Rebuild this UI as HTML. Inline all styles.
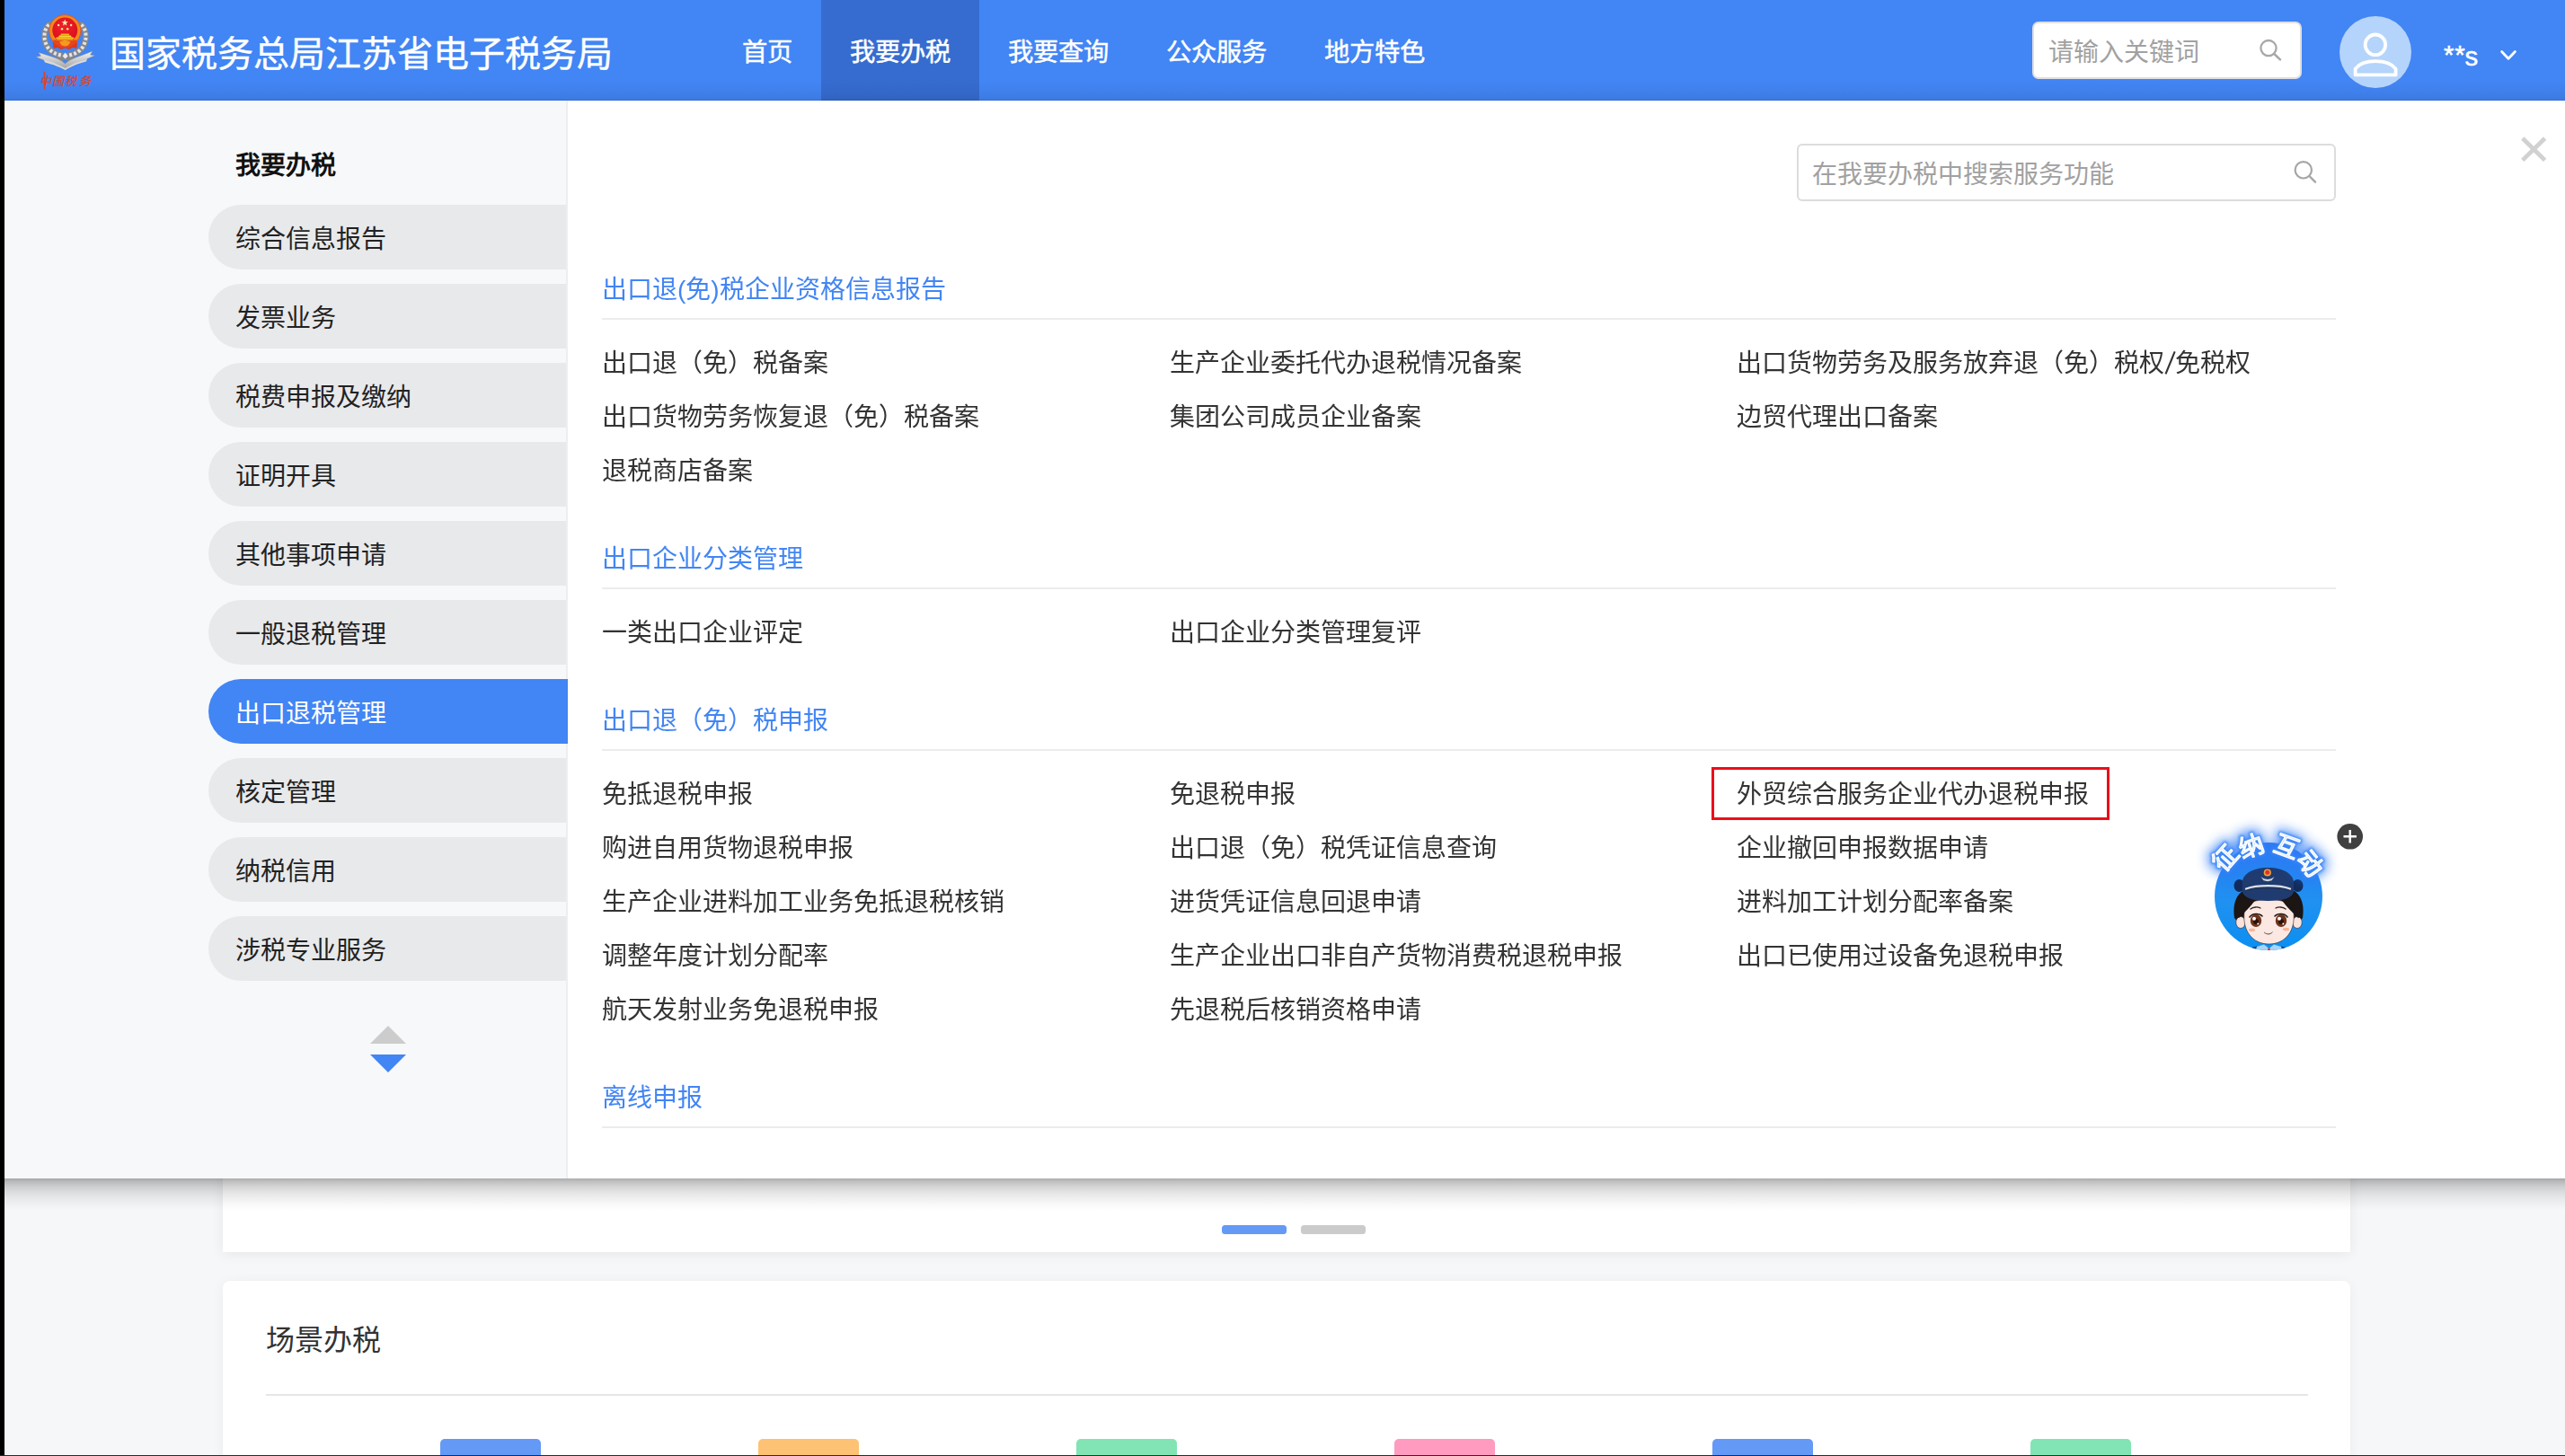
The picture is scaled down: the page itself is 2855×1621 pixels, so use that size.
<!DOCTYPE html>
<html lang="zh-CN">
<head>
<meta charset="utf-8">
<title>国家税务总局江苏省电子税务局</title>
<style>
*{margin:0;padding:0;box-sizing:border-box;}
html,body{width:2855px;height:1621px;overflow:hidden;}
body{position:relative;background:#f6f7f9;font-family:"Liberation Sans",sans-serif;color:#333;}
.abs{position:absolute;}
.t{position:absolute;white-space:nowrap;font-size:28px;height:40px;line-height:40px;}
/* underlying page */
#card1{left:248px;top:1200px;width:2368px;height:194px;background:#fff;box-shadow:0 2px 14px rgba(0,0,0,.07);}
#card2{left:248px;top:1426px;width:2368px;height:260px;background:#fff;border-radius:8px;box-shadow:0 2px 14px rgba(0,0,0,.05);}
.dot{top:1364px;width:72px;height:10px;border-radius:3.5px;}
.tile{top:1602px;width:112px;height:40px;border-radius:5px 5px 0 0;}
/* header */
#hdr{left:5px;top:0;width:2850px;height:112px;background:#4285f4;}
#hdr .grad{left:0;top:0;width:100%;height:100%;background:linear-gradient(to bottom,rgba(0,0,0,0) 80%,rgba(0,0,30,.035) 90%,rgba(0,0,30,.08) 98.5%,rgba(0,0,60,.2) 100%);}
.nav{top:0;height:112px;line-height:117px;font-size:28.3px;-webkit-text-stroke:.45px #fff;color:#fff;text-align:center;white-space:nowrap;}
#title{left:121.5px;top:29.5px;height:60px;line-height:60px;font-size:40px;-webkit-text-stroke:.4px #fff;color:#fff;white-space:nowrap;}
/* panel */
#panel{left:5px;top:112px;width:2850px;height:1200px;background:#fff;}
#side{left:0;top:0;width:625px;height:1200px;background:#f7f8fa;border-right:2px solid #eeeeef;box-sizing:content-box;}
.pill{left:227px;width:398px;height:72px;border-radius:36px 0 0 36px;background:#e8e9eb;}
.pill span{position:absolute;left:30px;top:3px;height:72px;line-height:72px;font-size:28px;color:#222;white-space:nowrap;}
.pill.on{background:#4285f4;width:400px;}
.pill.on span{color:#fff;}
.h{color:#4285f4;}
.hr{left:670px;width:1930px;height:2px;background:#ececec;}
#pshadow{left:5px;top:1312px;width:2850px;height:36px;background:linear-gradient(to bottom,rgba(0,0,0,.32) 0,rgba(0,0,0,.24) 4px,rgba(0,0,0,.17) 9px,rgba(0,0,0,.11) 15px,rgba(0,0,0,.065) 21px,rgba(0,0,0,.03) 28px,rgba(0,0,0,0) 36px);}
</style>
</head>
<body>

<!-- underlying home page -->
<div id="card1" class="abs"></div>
<div class="abs dot" style="left:1360px;background:#6499f5;"></div>
<div class="abs dot" style="left:1448px;background:#cbcbcb;"></div>
<div id="card2" class="abs"></div>
<div class="abs" style="left:296px;top:1468px;height:48px;line-height:48px;font-size:32px;color:#333;white-space:nowrap;">场景办税</div>
<div class="abs" style="left:296px;top:1552px;width:2273px;height:2px;background:#e6e6e6;"></div>
<div class="abs tile" style="left:490px;background:#6499f5;"></div>
<div class="abs tile" style="left:844px;background:#fdc273;"></div>
<div class="abs tile" style="left:1198px;background:#82e4b4;"></div>
<div class="abs tile" style="left:1552px;background:#fe9bbf;"></div>
<div class="abs tile" style="left:1906px;background:#6499f5;"></div>
<div class="abs tile" style="left:2260px;background:#82e4b4;"></div>

<!-- panel shadow -->
<div id="pshadow" class="abs"></div>

<!-- dropdown panel -->
<div id="panel" class="abs">
  <div id="side" class="abs"></div>
</div>

<!-- sidebar -->
<div class="t" style="left:262px;top:165px;font-weight:bold;color:#111;">我要办税</div>
<div class="abs pill" style="left:232px;top:228px;"><span>综合信息报告</span></div>
<div class="abs pill" style="left:232px;top:316px;"><span>发票业务</span></div>
<div class="abs pill" style="left:232px;top:404px;"><span>税费申报及缴纳</span></div>
<div class="abs pill" style="left:232px;top:492px;"><span>证明开具</span></div>
<div class="abs pill" style="left:232px;top:580px;"><span>其他事项申请</span></div>
<div class="abs pill" style="left:232px;top:668px;"><span>一般退税管理</span></div>
<div class="abs pill on" style="left:232px;top:756px;"><span>出口退税管理</span></div>
<div class="abs pill" style="left:232px;top:844px;"><span>核定管理</span></div>
<div class="abs pill" style="left:232px;top:932px;"><span>纳税信用</span></div>
<div class="abs pill" style="left:232px;top:1020px;"><span>涉税专业服务</span></div>
<svg class="abs" style="left:412px;top:1142px;" width="40" height="52" viewBox="0 0 40 52"><path d="M20 0 L40 20 L0 20 Z" fill="#cccccc"/><path d="M0 32 L40 32 L20 52 Z" fill="#4285f4"/></svg>

<!-- content search -->
<div class="abs" style="left:2000px;top:160px;width:600px;height:64px;border:2px solid #dcdcdc;border-radius:6px;background:#fff;"></div>
<div class="t" style="left:2017px;top:175px;color:#a1a1a1;">在我要办税中搜索服务功能</div>
<svg class="abs" style="left:2550px;top:176px;" width="32" height="32" viewBox="0 0 32 32"><circle cx="13.8" cy="13.3" r="9.2" fill="none" stroke="#a6a6a6" stroke-width="2.2"/><path d="M20.4 20 L27 26.6" stroke="#a6a6a6" stroke-width="2.4" stroke-linecap="round"/></svg>
<svg class="abs" style="left:2804px;top:150px;" width="32" height="32" viewBox="0 0 32 32"><path d="M3.8 4 L28.6 28.4 M28.6 4 L3.8 28.4" stroke="#d1d1d1" stroke-width="4.8" fill="none"/></svg>

<div id="content" class="abs" style="left:0;top:0;width:2855px;height:1312px;will-change:transform;">
<!-- section 1 -->
<div class="t h" style="left:670px;top:303px;">出口退(免)税企业资格信息报告</div>
<div class="abs hr" style="top:354px;"></div>
<div class="t" style="left:670px;top:385px;">出口退（免）税备案</div>
<div class="t" style="left:1301.5px;top:385px;">生产企业委托代办退税情况备案</div>
<div class="t" style="left:1933px;top:385px;">出口货物劳务及服务放弃退（免）税权<span style="display:inline-block;position:relative;width:12.2px;height:0;"><svg style="position:absolute;left:0;top:-23.4px;overflow:visible;" width="12.2" height="26" viewBox="0 0 12.2 26"><path d="M1.5 25.4 L11.7 0.4" stroke="#333" stroke-width="2.1" fill="none"/></svg></span>免税权</div>
<div class="t" style="left:670px;top:445px;">出口货物劳务恢复退（免）税备案</div>
<div class="t" style="left:1301.5px;top:445px;">集团公司成员企业备案</div>
<div class="t" style="left:1933px;top:445px;">边贸代理出口备案</div>
<div class="t" style="left:670px;top:505px;">退税商店备案</div>

<!-- section 2 -->
<div class="t h" style="left:670px;top:603px;">出口企业分类管理</div>
<div class="abs hr" style="top:654px;"></div>
<div class="t" style="left:670px;top:685px;">一类出口企业评定</div>
<div class="t" style="left:1301.5px;top:685px;">出口企业分类管理复评</div>

<!-- section 3 -->
<div class="t h" style="left:670px;top:783px;">出口退（免）税申报</div>
<div class="abs hr" style="top:834px;"></div>
<div class="t" style="left:670px;top:865px;">免抵退税申报</div>
<div class="t" style="left:1301.5px;top:865px;">免退税申报</div>
<div class="abs" style="left:1905px;top:854px;width:443px;height:59px;border:3px solid #ea0f19;"></div>
<div class="t" style="left:1933px;top:865px;">外贸综合服务企业代办退税申报</div>
<div class="t" style="left:670px;top:925px;">购进自用货物退税申报</div>
<div class="t" style="left:1301.5px;top:925px;">出口退（免）税凭证信息查询</div>
<div class="t" style="left:1933px;top:925px;">企业撤回申报数据申请</div>
<div class="t" style="left:670px;top:985px;">生产企业进料加工业务免抵退税核销</div>
<div class="t" style="left:1301.5px;top:985px;">进货凭证信息回退申请</div>
<div class="t" style="left:1933px;top:985px;">进料加工计划分配率备案</div>
<div class="t" style="left:670px;top:1045px;">调整年度计划分配率</div>
<div class="t" style="left:1301.5px;top:1045px;">生产企业出口非自产货物消费税退税申报</div>
<div class="t" style="left:1933px;top:1045px;">出口已使用过设备免退税申报</div>
<div class="t" style="left:670px;top:1105px;">航天发射业务免退税申报</div>
<div class="t" style="left:1301.5px;top:1105px;">先退税后核销资格申请</div>

<!-- section 4 -->
<div class="t h" style="left:670px;top:1203px;">离线申报</div>
<div class="abs hr" style="top:1254px;"></div>

</div>

<!-- mascot -->
<svg class="abs" style="left:2430px;top:900px;overflow:visible;" width="220" height="170" viewBox="2430 900 220 170">
  <defs>
    <linearGradient id="mbg" x1="0" y1="0" x2="0" y2="1"><stop offset="0" stop-color="#2b78f1"/><stop offset=".55" stop-color="#2091f1"/><stop offset="1" stop-color="#0a8ff2"/></linearGradient>
    <clipPath id="mclip"><circle cx="2525" cy="998" r="60"/></clipPath>
    <filter id="glow" x="-30%" y="-30%" width="160%" height="160%"><feGaussianBlur stdDeviation="6.5"/></filter>
    <filter id="glow2" x="-30%" y="-30%" width="160%" height="160%"><feGaussianBlur stdDeviation="1.6"/></filter>
  </defs>
  <circle cx="2525" cy="998" r="60" fill="url(#mbg)"/>
  <g clip-path="url(#mclip)">
    <!-- hair back -->
    <path d="M2487 1022 C2484 1000 2492 985 2525 985 C2558 985 2566 1000 2563 1022 L2556 1030 L2494 1030 Z" fill="#1b1514"/>
    <!-- buns -->
    <ellipse cx="2492.5" cy="986" rx="6" ry="7" fill="#122b5c"/>
    <ellipse cx="2557.5" cy="986" rx="6" ry="7" fill="#122b5c"/>
    <!-- ears -->
    <ellipse cx="2494" cy="1027" rx="5.2" ry="6.5" fill="#f9e3dc" stroke="#3a2a26" stroke-width=".6"/>
    <ellipse cx="2557" cy="1027" rx="5.2" ry="6.5" fill="#f9e3dc" stroke="#3a2a26" stroke-width=".6"/>
    <!-- face -->
    <path d="M2498 1016 C2498 996 2552 996 2553 1016 C2555 1036 2544 1051 2525.5 1051 C2507 1051 2496 1036 2498 1016 Z" fill="#fbe8e2" stroke="#3a2a26" stroke-width=".6"/>
    <!-- fringe -->
    <path d="M2488 1020 C2487 1002 2497 994 2512 998 C2509 1006 2500 1014 2492 1022 Z" fill="#1b1514"/>
    <path d="M2562 1020 C2563 1002 2553 994 2538 998 C2541 1006 2550 1014 2558 1022 Z" fill="#1b1514"/>
    <!-- hat -->
    <path d="M2496 986 C2494 974 2506 966 2524.5 966 C2543 966 2555 974 2553 986 L2553 993 C2551 1000 2541 1003 2524.5 1003 C2508 1003 2498 1000 2496 993 Z" fill="#1f3b70"/>
    <path d="M2500 989.5 C2512 985 2537 985 2549 989.5" fill="none" stroke="#dfe3ea" stroke-width="2.3" stroke-linecap="round"/>
    <path d="M2500 991.8 C2512 987.4 2537 987.4 2549 991.8" fill="none" stroke="#2a2f3a" stroke-width=".7" stroke-linecap="round"/>
    <!-- badge -->
    <circle cx="2523.8" cy="971.5" r="4.1" fill="#e9a63a"/>
    <circle cx="2523.8" cy="971.2" r="2.5" fill="#e3312a"/>
    <path d="M2516.5 976.2 L2520 978.3 L2524 979 L2528 978.3 L2531.5 976.2 L2528.5 980.3 L2524 981.3 L2519.5 980.3 Z" fill="#cfd3da"/>
    <!-- eyebrows -->
    <path d="M2505 1012 C2508 1009.5 2513 1009.5 2516 1011" fill="none" stroke="#2a1f1c" stroke-width="1.3" stroke-linecap="round"/>
    <path d="M2533 1011 C2536 1009.5 2541 1009.5 2544 1012" fill="none" stroke="#2a1f1c" stroke-width="1.3" stroke-linecap="round"/>
    <!-- eyes -->
    <ellipse cx="2511" cy="1025" rx="6.2" ry="7" fill="#6e321a"/>
    <ellipse cx="2539" cy="1025" rx="6.2" ry="7" fill="#6e321a"/>
    <path d="M2504 1021 C2507 1016.5 2515 1016.5 2518 1020" fill="none" stroke="#241a17" stroke-width="1.6" stroke-linecap="round"/>
    <path d="M2532 1020 C2535 1016.5 2543 1016.5 2546 1021" fill="none" stroke="#241a17" stroke-width="1.6" stroke-linecap="round"/>
    <circle cx="2511" cy="1026" r="3" fill="#2a120a"/>
    <circle cx="2539" cy="1026" r="3" fill="#2a120a"/>
    <circle cx="2509" cy="1022.8" r="2" fill="#fff"/>
    <circle cx="2537" cy="1022.8" r="2" fill="#fff"/>
    <circle cx="2513.3" cy="1028.5" r="1" fill="#fff"/>
    <circle cx="2541.3" cy="1028.5" r="1" fill="#fff"/>
    <!-- cheeks -->
    <ellipse cx="2506.5" cy="1035.3" rx="3.6" ry="1.9" fill="#fbb59a"/>
    <ellipse cx="2544.5" cy="1034.6" rx="3.6" ry="1.9" fill="#fbb59a"/>
    <!-- mouth -->
    <path d="M2520.5 1038.3 C2523 1040.6 2527 1040.6 2529.2 1038" fill="none" stroke="#4a2d28" stroke-width=".9" stroke-linecap="round"/>
    <!-- collar -->
    <path d="M2508 1060 L2512 1054 L2520 1051.5 L2525.5 1056 L2531 1051.5 L2539 1054 L2543 1060 Z" fill="#a9d3f7"/>
    <path d="M2502 1060 L2506 1055 L2512 1053.5 L2510 1060 Z" fill="#1f3b70"/>
    <path d="M2549 1060 L2545 1055 L2539 1053.5 L2541 1060 Z" fill="#1f3b70"/>
    <path d="M2524.5 1055.5 L2526.5 1055.5 L2527 1060 L2524 1060 Z" fill="#c4352c"/>
  </g>
  <!-- arc text glow -->
  <g font-family="'Liberation Sans',sans-serif" font-weight="bold" font-size="27.5" text-anchor="middle">
    <g fill="#2f7bf6" stroke="#2f7bf6" stroke-width="9" filter="url(#glow)" opacity=".8">
      <text transform="translate(2476.7 954.9) rotate(-48)" y="10">征</text>
      <text transform="translate(2505.9 942) rotate(-19)" y="10">纳</text>
      <text transform="translate(2545 942) rotate(20)" y="10">互</text>
      <text transform="translate(2571.3 960.7) rotate(51)" y="10">动</text>
    </g>
    <g fill="#3b86f7" stroke="#3b86f7" stroke-width="3.2" filter="url(#glow2)">
      <text transform="translate(2476.7 954.9) rotate(-48)" y="10">征</text>
      <text transform="translate(2505.9 942) rotate(-19)" y="10">纳</text>
      <text transform="translate(2545 942) rotate(20)" y="10">互</text>
      <text transform="translate(2571.3 960.7) rotate(51)" y="10">动</text>
    </g>
    <g fill="#c4dcfe" stroke="#fff" stroke-width="1.45" stroke-linejoin="round" font-weight="normal">
      <text transform="translate(2476.7 954.9) rotate(-48)" y="10">征</text>
      <text transform="translate(2505.9 942) rotate(-19)" y="10">纳</text>
      <text transform="translate(2545 942) rotate(20)" y="10">互</text>
      <text transform="translate(2571.3 960.7) rotate(51)" y="10">动</text>
    </g>
  </g>
  <!-- plus button -->
  <circle cx="2615.7" cy="931.3" r="14.3" fill="#404040"/>
  <path d="M2608.5 931.3 L2622.9 931.3 M2615.7 924.1 L2615.7 938.5" stroke="#fff" stroke-width="2.4" fill="none"/>
</svg>

<!-- header -->
<div id="hdr" class="abs">
  <div class="abs" style="left:909px;top:0;width:176px;height:112px;background:#366cd0;"></div>
  <div class="abs grad"></div>
</div>
<div id="title" class="abs">国家税务总局江苏省电子税务局</div>
<div class="abs nav" style="left:794px;width:120px;">首页</div>
<div class="abs nav" style="left:914px;width:176px;">我要办税</div>
<div class="abs nav" style="left:1090px;width:176px;">我要查询</div>
<div class="abs nav" style="left:1266px;width:176px;">公众服务</div>
<div class="abs nav" style="left:1442px;width:176px;">地方特色</div>

<!-- logo -->
<svg class="abs" style="left:36px;top:12px;" width="74" height="92" viewBox="36 12 74 92">
  <defs>
    <linearGradient id="sil" x1="0" y1="0" x2="0" y2="1"><stop offset="0" stop-color="#f4f4f4"/><stop offset=".5" stop-color="#c9c9c9"/><stop offset="1" stop-color="#9c9c9c"/></linearGradient>
    <radialGradient id="rg" cx=".45" cy=".35" r=".7"><stop offset="0" stop-color="#f0202a"/><stop offset="1" stop-color="#d80f1c"/></radialGradient>
  </defs>
  <!-- wreath -->
  <path d="M54.5 27.5 C48 33 47.5 46 54.5 54.5 C58 58.5 63 60.5 68 61.5 L78 65.2" fill="none" stroke="#86878b" stroke-width="6.6" stroke-linecap="round" stroke-linejoin="round"/>
  <path d="M90.5 27.5 C97 33 97.5 46 90.5 54.5 C87 58.5 82 60.5 77 61.5 L67 65.2" fill="none" stroke="#86878b" stroke-width="6.6" stroke-linecap="round" stroke-linejoin="round"/>
  <path d="M54.5 27.5 C48 33 47.5 46 54.5 54.5 C58 58.5 63 60.5 68 61.5" fill="none" stroke="#e4e4e6" stroke-width="4" stroke-dasharray="3 2.2"/>
  <path d="M90.5 27.5 C97 33 97.5 46 90.5 54.5 C87 58.5 82 60.5 77 61.5" fill="none" stroke="#e4e4e6" stroke-width="4" stroke-dasharray="3 2.2"/>
  <path d="M72.6 58.6 L75.6 62.6 L72.6 65.6 L69.6 62.6 Z" fill="#ececee"/>
  <!-- ribbon -->
  <path d="M43 58.5 L56 62.5 C64 65 68 67 72.5 71 C77 67 82 64.5 90 62 L103 57 L100.5 61 L105.5 61.8 L96 66 C86 69.5 79 73 72.8 78 C66 73 60 70.5 50 67.5 L40.2 63.5 L45.5 62.3 Z" fill="url(#sil)" stroke="#8c8c8e" stroke-width=".5"/>
  <path d="M48.5 66 L50 69.5 C60 72 66 74.5 72.8 78 C79 74 86 71 96 68.5 L97 65.5 C86 69 79 72 72.8 76 C66 72.5 60 69.5 48.5 66 Z" fill="#d9d9da"/>
  <!-- emblem -->
  <path d="M58.5 44 L59.5 54 L64 53 L68 55 L72.3 53.5 L77 55 L81 53 L85.5 54 L86 44 Z" fill="#e0381b"/>
  <circle cx="72.3" cy="34.2" r="17.6" fill="#f18a1c"/>
  <circle cx="72.3" cy="34.2" r="17.6" fill="none" stroke="#e8561f" stroke-width="1"/>
  <circle cx="72.3" cy="33.6" r="14" fill="url(#rg)"/>
  <path d="M58.6 44.5 C62 50.5 67 53.5 72.3 53.5 C77.6 53.5 82.6 50.5 86 44.5 Z" fill="#e8451c"/>
  <path d="M66 46.5 L72.3 44.8 L78.6 46.5 L76 50.5 L72.3 51.6 L68.6 50.5 Z" fill="#f29a22"/>
  <!-- tiananmen -->
  <path d="M61.6 43.2 L83 43.2 L81.5 41.6 L63.1 41.6 Z" fill="#f6c520"/>
  <path d="M64.5 41.6 L80.1 41.6 L78.6 39.4 L66 39.4 Z" fill="#f7d13a"/>
  <path d="M67 39.4 L77.6 39.4 L76.6 37.6 L68 37.6 Z" fill="#f3b81c"/>
  <rect x="63.4" y="43.2" width="17.8" height="1.7" fill="#f0a41d"/>
  <!-- stars -->
  <path d="M72.2 21.6 L73.1 24.1 L75.8 24.2 L73.7 25.8 L74.4 28.4 L72.2 26.9 L70 28.4 L70.7 25.8 L68.6 24.2 L71.3 24.1 Z" fill="#fbeeb0"/>
  <circle cx="65.1" cy="28" r="1.25" fill="#f9e49a"/>
  <circle cx="79.1" cy="28" r="1.25" fill="#f9e49a"/>
  <circle cx="69" cy="32.2" r="1.25" fill="#f9e49a"/>
  <circle cx="75.2" cy="32.2" r="1.25" fill="#f9e49a"/>
  <!-- calligraphy -->
  <g fill="#d9442a" stroke="#d9442a" stroke-width=".15" font-family="'Liberation Serif',serif" font-style="italic" font-size="13.2">
    <text x="44.3 57.6 71.8 88.4" y="94.6">中国税务</text>
  </g>
  <rect x="48.6" y="79.8" width="1.7" height="19.6" rx=".85" fill="#d9442a"/>
</svg>

<!-- header search -->
<div class="abs" style="left:2262px;top:24px;width:300px;height:64px;background:#fff;border:2px solid #dfdfdf;border-radius:7px;"></div>
<div class="t" style="left:2280px;top:39px;color:#a1a1a1;">请输入关键词</div>
<svg class="abs" style="left:2510px;top:40px;" width="34" height="34" viewBox="0 0 34 34"><circle cx="15" cy="13.6" r="8.6" fill="none" stroke="#a8a8a8" stroke-width="2.3"/><path d="M21.3 20 L28 26.4" stroke="#a8a8a8" stroke-width="2.5" stroke-linecap="round"/></svg>

<!-- avatar -->
<svg class="abs" style="left:2604px;top:18px;" width="80" height="80" viewBox="0 0 80 80">
  <circle cx="40" cy="40" r="40" fill="#b5d4fb"/>
  <circle cx="39.9" cy="31.8" r="11.3" fill="none" stroke="#fff" stroke-width="3.8"/>
  <path d="M17.6 65.4 L17.6 58.6 C26 47.4 54 47.4 62.6 58.6 L62.6 65.4 Z" fill="none" stroke="#fff" stroke-width="3.8" stroke-linejoin="round"/>
</svg>
<div class="t" style="left:2720px;top:43px;color:#fff;font-size:29.5px;-webkit-text-stroke:.5px #fff;"><span style="position:relative;top:-2px;letter-spacing:.8px;margin-right:-1px;">**</span>s</div>
<svg class="abs" style="left:2780px;top:52px;" width="24" height="20" viewBox="0 0 24 20"><path d="M4.6 5.6 L12 13.2 L19.4 5.6" fill="none" stroke="#fff" stroke-width="2.8" stroke-linecap="round" stroke-linejoin="round"/></svg>

<!-- frame edges -->
<div class="abs" style="left:0;top:0;width:5px;height:1621px;background:#000;"></div>
<div class="abs" style="left:0;top:1620px;width:2855px;height:1px;background:#2a2a2a;"></div>
</body>
</html>
